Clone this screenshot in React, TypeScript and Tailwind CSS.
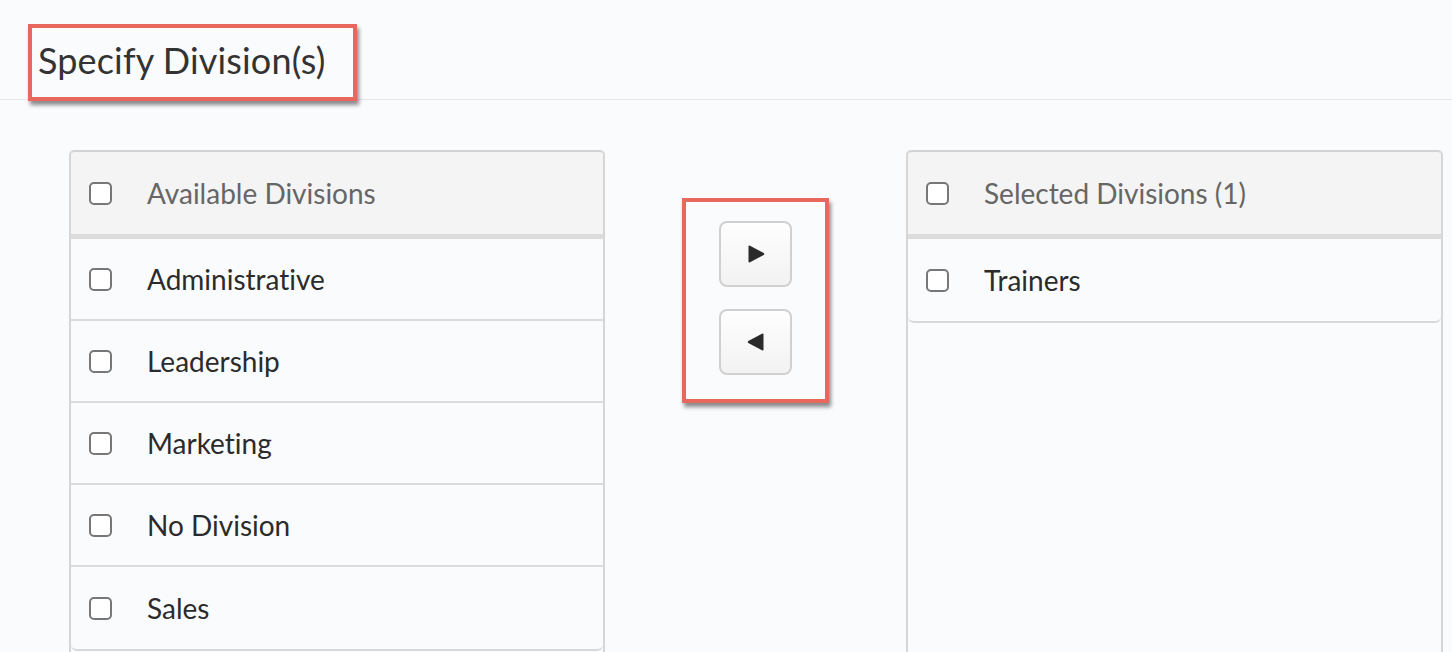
import { useState } from 'react';

const available = ['Administrative', 'Leadership', 'Marketing', 'No Division', 'Sales'];
const selected = ['Trainers'];

function Box({ checked, onChange }: { checked: boolean; onChange: () => void }) {
  return (
    <button
      onClick={onChange}
      className="w-[23px] h-[23px] shrink-0 rounded-[5px] border-2 border-[#777] bg-white flex items-center justify-center"
    >
      {checked && <span className="w-[11px] h-[11px] rounded-[2px] bg-[#555]" />}
    </button>
  );
}

function Panel({ title, items }: { title: string; items: string[] }) {
  const [checked, setChecked] = useState<string[]>([]);
  const all = items.length > 0 && checked.length === items.length;
  const toggle = (name: string) =>
    setChecked((c) => (c.includes(name) ? c.filter((x) => x !== name) : [...c, name]));

  return (
    <div className="flex flex-col border-x-2 border-[#d6d6d6] rounded-t-[5px] min-h-[520px]">
      {/* Header */}
      <div className="h-[89px] flex items-center gap-[35px] pl-[18px] bg-[#f4f4f4] border-t-2 border-[#d2d2d2] rounded-t-[4px] border-b-[5px] border-b-[#dcdcdc]">
        <Box checked={all} onChange={() => setChecked(all ? [] : items)} />
        <span className="text-[28px] text-[#666]">{title}</span>
      </div>

      {/* List */}
      <div className="rounded-b-[6px] border-b-2 border-[#d8d8d8] bg-[#fafbfd]">
        {items.map((name, i) => (
          <div
            key={name}
            className={`h-[82px] flex items-center gap-[35px] pl-[18px] ${i < items.length - 1 ? 'border-b-2 border-[#dcdcdc]' : ''}`}
          >
            <Box checked={checked.includes(name)} onChange={() => toggle(name)} />
            <span className="text-[28px] text-[#2b2b2b]">{name}</span>
          </div>
        ))}
      </div>
    </div>
  );
}

function MoveButton({ dir }: { dir: 'right' | 'left' }) {
  return (
    <button className="w-[73px] h-[66px] rounded-[8px] border-2 border-[#d0d0d0] bg-gradient-to-b from-[#fefefe] to-[#f2f2f2] flex items-center justify-center">
      <svg width="22" height="22" viewBox="0 0 22 22">
        {dir === 'right' ? (
          <path d="M3.5 3.6 Q3.5 2 5 2.7 L18.7 10 Q20 11 18.7 12 L5 19.3 Q3.5 20 3.5 18.4 Z" fill="#2a2a2a" />
        ) : (
          <path d="M18.5 3.6 Q18.5 2 17 2.7 L3.3 10 Q2 11 3.3 12 L17 19.3 Q18.5 20 18.5 18.4 Z" fill="#2a2a2a" />
        )}
      </svg>
    </button>
  );
}

export default function App() {
  return (
    <div className="w-[1452px] h-[652px] overflow-hidden bg-[#fafbfd] font-['Lato','Liberation_Sans',sans-serif] [font-variant-ligatures:none]">
      {/* Title */}
      <div className="pt-[24px] pl-[28px] border-b border-[#e6e7ea] h-[100px]">
        <div className="inline-block border-4 border-[#e8695b] pl-[6px] pr-[28px] pt-[7px] pb-[11px] shadow-[2px_4px_4px_rgba(0,0,0,0.45)] relative z-10">
          <h1 className="text-[36px] leading-[51px] text-[#333] tracking-[0.15px]">Specify Division(s)</h1>
        </div>
      </div>

      {/* Picker */}
      <div className="flex pl-[69px] pt-[50px]">
        <div className="w-[536px]">
          <Panel title="Available Divisions" items={available} />
        </div>
        <div className="w-[301px] flex justify-center">
          <div className="mt-[48px] self-start border-4 border-[#e8695b] px-[33px] pt-[19px] pb-[24px] flex flex-col gap-[22px] shadow-[2px_4px_4px_rgba(0,0,0,0.45)]">
            <MoveButton dir="right" />
            <MoveButton dir="left" />
          </div>
        </div>
        <div className="w-[537px]">
          <Panel title="Selected Divisions (1)" items={selected} />
        </div>
      </div>
    </div>
  );
}
